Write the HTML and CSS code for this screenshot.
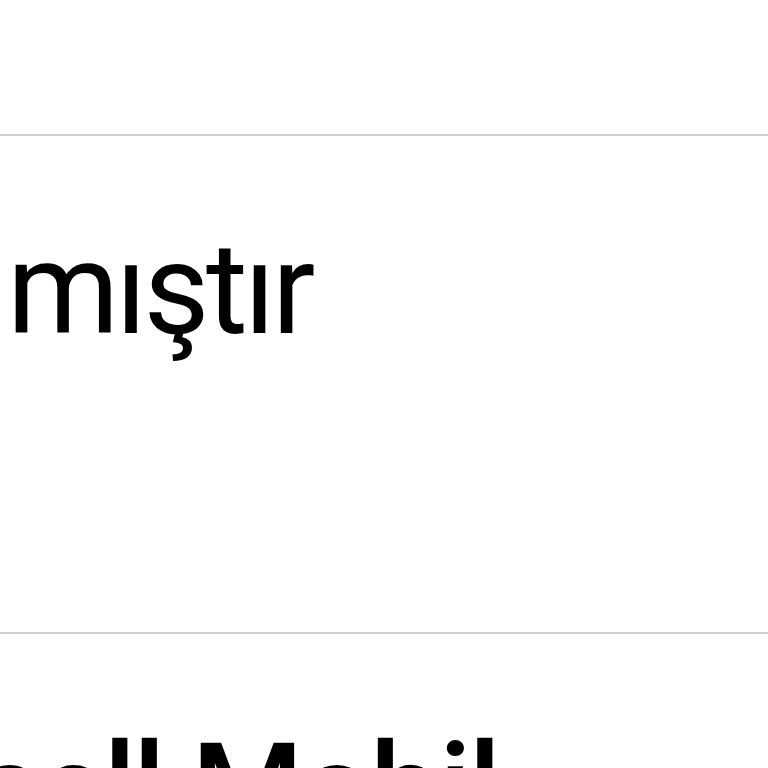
FILE: index.html
```html
<!DOCTYPE html>
<html lang="tr">
<head>
<meta charset="utf-8">
<link rel="stylesheet" href="styles.css">
</head>
<body>
<div class="page">
  <div class="top"></div>
  <div class="row row-status">
    <p class="text status">mıştır</p>
  </div>
  <div class="row row-name">
    <p class="text name">cell Mobil</p>
  </div>
</div>
</body>
</html>
```
FILE: styles.css
```css
html, body {
  margin: 0;
  padding: 0;
  background: #fff;
  overflow: hidden;
  height: 768px;
}
.page {
  width: 768px;
  font-family: Roboto, "Noto Sans", sans-serif;
  color: #000;
}
.top {
  height: 134px;
}
.row {
  border-top: 2px solid #d2d2d2;
  box-sizing: border-box;
}
.row-status {
  height: 498px;
  padding-top: 78px;
}
.row-name {
  height: 136px;
  overflow: hidden;
  padding-top: 81px;
}
.text {
  margin: 0;
  font-size: 128px;
  line-height: 150px;
  letter-spacing: -3px;
  white-space: nowrap;
}
.status {
  padding-left: 7px;
  letter-spacing: -3.7px;
}
.name {
  font-weight: 500;
  margin-left: -26px;
}
```
